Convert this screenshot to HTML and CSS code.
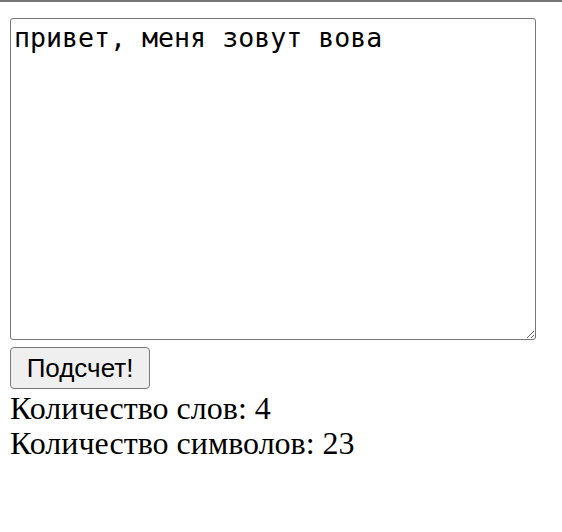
FILE: index.html
```html
<!DOCTYPE html>
<html lang="ru">
<head>
<meta charset="utf-8">
<link rel="stylesheet" href="styles.css">
</head>
<body>
<div class="page">
  <textarea class="input">привет, меня зовут вова</textarea>
  <button class="count-btn" type="button">Подсчет!</button>
  <div class="results">
    <div class="result">Количество слов: 4</div>
    <div class="result">Количество символов: 23</div>
  </div>
</div>
</body>
</html>
```
FILE: styles.css
```css
html, body {
  margin: 0;
  padding: 0;
  background: #fff;
}
.page {
  border-top: 2px solid #777;
  padding: 16px 10px 0 10px;
  display: flex;
  flex-direction: column;
  align-items: flex-start;
  font-family: "Liberation Serif", "Times New Roman", serif;
}
.input {
  box-sizing: border-box;
  width: 526px;
  height: 322px;
  margin: 0;
  padding: 3px 3px;
  border: 1px solid #767676;
  border-radius: 3px;
  font-family: "DejaVu Sans Mono", monospace;
  font-size: 26.6px;
  color: #000;
  resize: both;
}
.count-btn {
  box-sizing: border-box;
  margin-top: 7px;
  width: 140px;
  height: 42px;
  padding: 0;
  border: 1px solid #767676;
  border-radius: 4px;
  background: #efefef;
  font-family: "Liberation Sans", Arial, sans-serif;
  font-size: 26px;
  color: #000;
}
.results {
  padding-top: 2px;
}
.result {
  font-size: 32px;
  line-height: 35px;
  color: #000;
}
```
